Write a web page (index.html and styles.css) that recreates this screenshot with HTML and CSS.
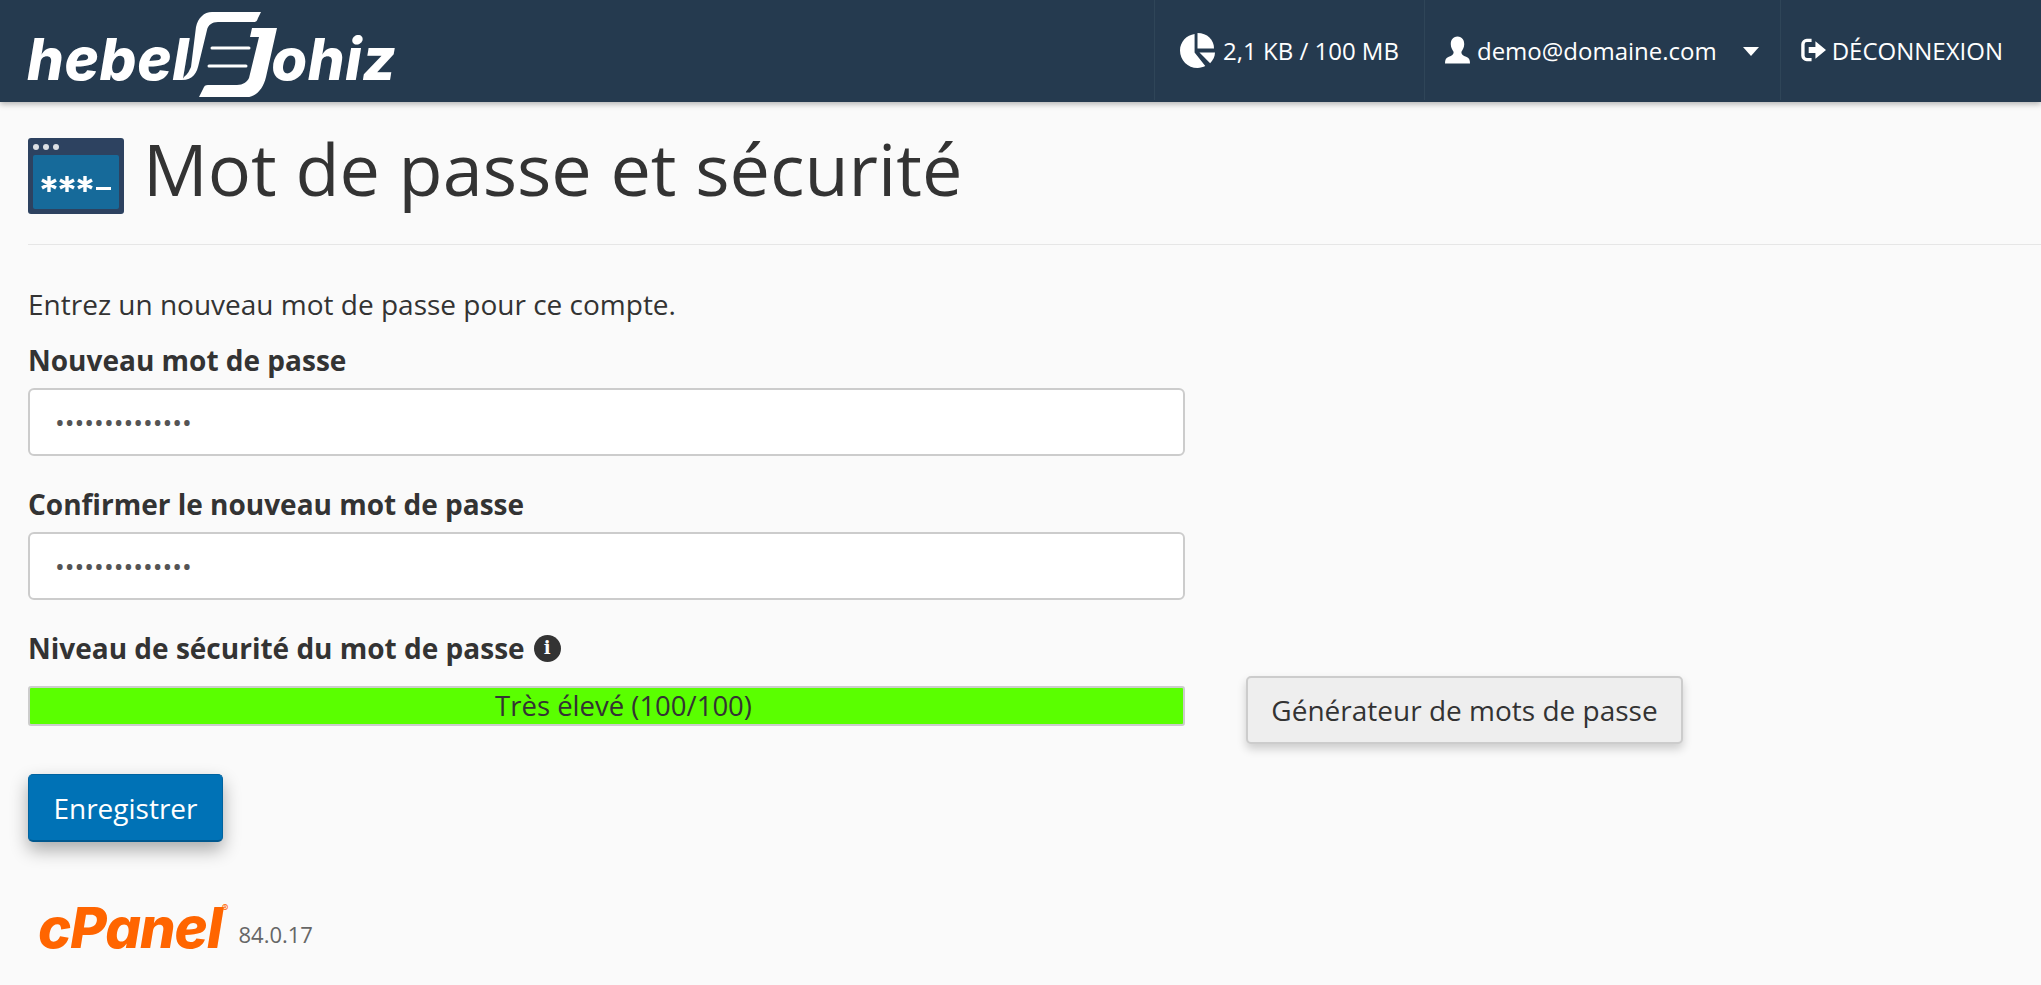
FILE: index.html
```html
<!DOCTYPE html>
<html lang="fr">
<head>
    <meta charset="UTF-8">
    <title>Mot de passe et sécurité</title>
    <link rel="stylesheet" href="styles.css">
</head>
<body>
    <header class="topbar">
        <a class="brand" href="#">
            <span class="brand-text">hebel</span>
            <svg class="brand-mark" viewBox="0 0 100 90" aria-hidden="true">
                <path fill="#fff" d="M82 4 L79 10 C78 13 77 14 75 14 L39 14 C33 14 29 17 28 22 L20 55 C18 65 14 72 3 72 L5 69 C9 66 10 63 12 59 L17 19 C19 10 25 4 33 4 Z"/>
                <path fill="#fff" d="M73 20 H98 L87 69 C84 82 76 89 68 89 H20 L25 79 C26 77 28 77 31 77 H58 C64 77 68 74 70 70 L80 29 H71 Z"/>
                <path fill="none" stroke="#fff" stroke-width="3" stroke-linecap="round" d="M33 40 H70 M30 58 H67"/>
            </svg>
            <span class="brand-text">ohiz</span>
        </a>
        <nav class="topnav">
            <div class="topnav-item topnav-usage">
                <svg class="icon-pie" viewBox="0 0 36 36" aria-hidden="true">
                    <path fill="#fff" d="M15 1 C7 2 0 9 0 18 C0 28 8 36 18 36 C21 36 24 35 26 34 L15 20 Z"/>
                    <path fill="#fff" d="M18 0 L18 16 L35 16 C35 7 28 0 18 0 Z"/>
                    <path fill="#fff" d="M20 20 L36 20 C36 24 34 28 31 31 Z"/>
                </svg>
                <span>2,1 KB / 100 MB</span>
            </div>
            <div class="topnav-item topnav-user">
                <svg class="icon-user" viewBox="0 0 26 28" aria-hidden="true">
                    <path fill="#fff" d="M13 0 C8 0 6 4 6 8 C6 12 8 14 9 16 C9 19 7 20 4 21 C1 22 0 24 0 28 L26 28 C26 24 25 22 22 21 C19 20 17 19 17 16 C18 14 20 12 20 8 C20 4 18 0 13 0 Z"/>
                </svg>
                <span>demo@domaine.com</span>
                <span class="caret"></span>
            </div>
            <div class="topnav-item topnav-logout">
                <svg class="icon-logout" viewBox="0 0 26 26" aria-hidden="true">
                    <path fill="none" stroke="#fff" stroke-width="3.5" d="M11 3 H6 C4 3 2 5 2 7 V19 C2 21 4 23 6 23 H11"/>
                    <path fill="#fff" d="M8 10 H15 V4 L26 13 L15 22 V16 H8 Z"/>
                </svg>
                <span>DÉCONNEXION</span>
            </div>
        </nav>
    </header>

    <main class="content">
        <div class="page-head">
            <svg class="page-icon" viewBox="0 0 96 76" aria-hidden="true">
                <rect width="96" height="76" rx="3" fill="#2d4260"/>
                <rect x="5" y="17" width="86" height="54" rx="2" fill="#166a9a"/>
                <circle cx="8" cy="9" r="3" fill="#dcdfe3"/>
                <circle cx="18" cy="9" r="3" fill="#dcdfe3"/>
                <circle cx="28" cy="9" r="3" fill="#dcdfe3"/>
                <path fill="none" stroke="#fff" stroke-width="3.4" d="M21 38 V54 M14 42 L28 50 M14 50 L28 42 M39 38 V54 M32 42 L46 50 M32 50 L46 42 M57 38 V54 M50 42 L64 50 M50 50 L64 42"/>
                <rect x="68" y="49" width="15" height="3" fill="#fff"/>
            </svg>
            <h1>Mot de passe et sécurité</h1>
        </div>

        <p class="intro">Entrez un nouveau mot de passe pour ce compte.</p>

        <div class="field">
            <label class="field-label" for="pass1">Nouveau mot de passe</label>
            <input class="text-input" id="pass1" type="password" value="motdepasse1234">
        </div>
        <div class="field">
            <label class="field-label" for="pass2">Confirmer le nouveau mot de passe</label>
            <input class="text-input" id="pass2" type="password" value="motdepasse1234">
        </div>

        <div class="strength-row">
            <div class="strength">
                <div class="field-label">
                    Niveau de sécurité du mot de passe
                    <span class="info-badge">i</span>
                </div>
                <div class="strength-bar">Très élevé (100/100)</div>
            </div>
            <button class="btn btn-default" type="button">Générateur de mots de passe</button>
        </div>

        <button class="btn btn-primary" type="button">Enregistrer</button>

        <footer class="foot">
            <span class="cpanel-logo">cPanel<sup>®</sup></span>
            <span class="version">84.0.17</span>
        </footer>
    </main>
</body>
</html>
```

FILE: styles.css
```css
* {
    box-sizing: border-box;
}
body {
    margin: 0;
    font-family: "Open Sans", sans-serif;
    font-size: 28px;
    color: #333;
    background-color: #fafafa;
}

/* top bar */
.topbar {
    display: flex;
    justify-content: space-between;
    height: 102px;
    padding-left: 27px;
    background-color: #253a4f;
    box-shadow: 0 2px 6px rgba(0, 0, 0, 0.3);
}
.brand {
    display: flex;
    align-items: flex-start;
    color: #fff;
    text-decoration: none;
}
.brand-text {
    margin-top: 30px;
    font-family: Inter, sans-serif;
    font-size: 58px;
    font-weight: 800;
    font-style: italic;
    letter-spacing: 0.6px;
    line-height: 1;
}
.brand-mark {
    width: 100px;
    height: 90px;
    margin: 8px -8px 0 -10px;
}
.topnav {
    display: flex;
    height: 100px;
    color: #fff;
    font-size: 24px;
}
.topnav-item {
    display: flex;
    align-items: center;
    padding: 0 28px 0 20px;
    border-left: 1px solid #2f4558;
}
.topnav-usage {
    padding-right: 25px;
}
.topnav-user {
    padding-right: 21px;
}
.topnav-logout {
    padding-right: 38px;
}
.icon-pie {
    width: 35px;
    height: 35px;
    margin: 0 8px 0 5px;
}
.icon-user {
    width: 25px;
    height: 28px;
    margin-right: 7px;
}
.icon-logout {
    width: 25px;
    height: 26px;
    margin-right: 6px;
}
.caret {
    width: 0;
    height: 0;
    margin: 3px 0 0 26px;
    border-top: 9px solid #fff;
    border-left: 8px solid transparent;
    border-right: 8px solid transparent;
}

/* page */
.content {
    padding: 0 0 0 28px;
}
.page-head {
    display: flex;
    align-items: center;
    gap: 19px;
    height: 143px;
    border-bottom: 1px solid #e6e6e6;
}
.page-icon {
    width: 96px;
    height: 76px;
    margin-top: 6px;
}
h1 {
    margin: -10px 0 0;
    font-size: 72px;
    font-weight: 400;
    line-height: 1;
}
.intro {
    margin: 43px 0 24px;
    line-height: 32px;
}
.field {
    width: 1157px;
    margin-bottom: 32px;
}
.field-label {
    display: block;
    margin-bottom: 12px;
    font-weight: 700;
    line-height: 32px;
}
.text-input {
    display: block;
    width: 100%;
    height: 68px;
    padding: 0 25px;
    border: 2px solid #ccc;
    border-radius: 6px;
    background: #fff;
    color: #555;
    font-family: "Open Sans", sans-serif;
    font-size: 26px;
}
.strength-row {
    display: flex;
    align-items: flex-end;
    gap: 61px;
}
.strength {
    width: 1157px;
}
.strength .field-label {
    display: flex;
    align-items: center;
    gap: 9px;
    margin-bottom: 22px;
}
.info-badge {
    display: flex;
    align-items: center;
    justify-content: center;
    width: 27px;
    height: 27px;
    border-radius: 50%;
    background: #333;
    color: #fff;
    font-family: "DejaVu Serif", serif;
    font-size: 18px;
    font-weight: 700;
}
.strength-bar {
    height: 40px;
    padding-left: 34px;
    border: 2px solid #ccc;
    border-radius: 3px;
    background-color: #5aff00;
    font-size: 27.5px;
    line-height: 36px;
    text-align: center;
}
.btn {
    height: 68px;
    border-radius: 5px;
    font-family: "Open Sans", sans-serif;
    font-size: 28px;
}
.btn-default {
    width: 437px;
    margin-bottom: -18px;
    border: 2px solid #ccc;
    background: #eee;
    color: #333;
    box-shadow: 0 5px 10px rgba(0, 0, 0, 0.18);
}
.btn-primary {
    display: block;
    width: 195px;
    margin-top: 48px;
    border: 1px solid #0063a0;
    border-bottom: 2px solid #00588f;
    background: #0072b6;
    color: #fff;
    box-shadow: 0 8px 18px rgba(0, 0, 0, 0.32);
}

/* footer */
.foot {
    display: flex;
    align-items: flex-start;
    gap: 10px;
    margin: 59px 0 0 10px;
}
.cpanel-logo {
    color: #ff6500;
    font-family: Inter, sans-serif;
    font-size: 56px;
    font-weight: 800;
    font-style: italic;
    letter-spacing: -1px;
    line-height: 54px;
}
.cpanel-logo sup {
    font-size: 10px;
    font-style: normal;
    font-weight: 400;
    letter-spacing: 0;
    vertical-align: 36px;
    line-height: 0;
}
.version {
    margin-top: 19px;
    color: #666;
    font-size: 22px;
    line-height: 28px;
}
```
